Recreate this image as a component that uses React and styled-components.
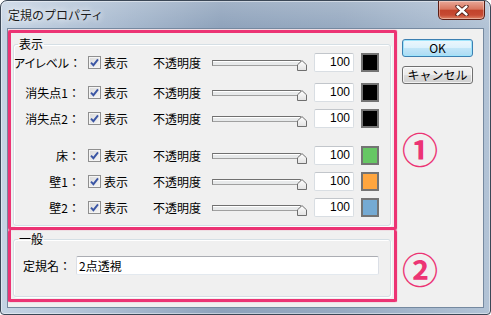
import styled, { createGlobalStyle } from "styled-components";

const GlobalStyle = createGlobalStyle`
  html, body {
    margin: 0;
    padding: 0;
    background: #ffffff;
  }
  body {
    font-family: "Noto Sans CJK JP", "Liberation Sans", sans-serif;
    font-size: 12px;
    color: #000;
  }
`;

const PINK = "#ec3474";

const Window = styled.div`
  width: 491px;
  height: 315px;
  box-sizing: border-box;
  border: 1px solid #3b4756;
  border-radius: 7px 7px 4px 4px;
  padding: 0 6px 6px;
  display: flex;
  flex-direction: column;
  background: linear-gradient(
      to bottom,
      rgba(255, 255, 255, 0.18) 0,
      rgba(255, 255, 255, 0) 28px
    ),
    linear-gradient(
      to right,
      #c6d4e4 0%,
      #b0c1d5 18%,
      #8ea2bb 45%,
      #97aac1 70%,
      #b2c3d6 100%
    );
  box-shadow: inset 0 0 0 1px rgba(255, 255, 255, 0.45);
`;

const TitleBar = styled.div`
  height: 27px;
  display: flex;
  align-items: flex-start;
  justify-content: space-between;
`;

const Title = styled.span`
  margin: 6px 0 0 1px;
  font-size: 12px;
  line-height: 16px;
  color: #1b1b1b;
  text-shadow: 0 0 6px #fff, 0 0 10px rgba(255, 255, 255, 0.8);
`;

const CloseButton = styled.div`
  width: 47px;
  height: 19px;
  margin-right: -1px;
  box-sizing: border-box;
  border: 1px solid #5c1e14;
  border-top: none;
  border-radius: 0 0 5px 5px;
  display: flex;
  align-items: center;
  justify-content: center;
  background: linear-gradient(
    to bottom,
    #e9a898 0%,
    #d9765f 45%,
    #c2432b 52%,
    #c64a33 78%,
    #df8566 100%
  );
  box-shadow: inset 0 0 0 1px rgba(255, 255, 255, 0.35);
`;

const Client = styled.div`
  flex: 1;
  display: flex;
  background: #f0f0f0;
  border: 1px solid #7589a0;
`;

const LeftCol = styled.div`
  width: 389px;
  padding-top: 1px;
  display: flex;
  flex-direction: column;
`;

const Section = styled.div`
  border: 3px solid ${PINK};
  border-top-width: ${(p) => (p.$joined ? 0 : 3)}px;
  border-radius: 2px;
  box-shadow: 0 0 1px ${PINK};
  display: flex;
  flex-direction: column;
`;

const Group = styled.fieldset`
  margin: ${(p) => p.$top}px 3px ${(p) => p.$bottom}px 2px;
  padding: 0;
  min-width: 0;
  border: 1px solid #d5dfe5;
  border-radius: 3px;
  box-shadow: inset 1px 1px 0 #fff, 1px 1px 0 #fff;
`;

const GroupTitle = styled.legend`
  margin-left: 4px;
  padding: 0 1px;
  font-size: 12px;
  line-height: 14px;
`;

const LayerList = styled.div`
  display: flex;
  flex-direction: column;
  gap: 6px;
  padding: 1px 0 8px;
`;

const LayerRow = styled.div`
  display: flex;
  align-items: center;
  height: 20px;
  margin-top: ${(p) => p.$extra || 0}px;
`;

const RowLabel = styled.span`
  width: 66px;
  flex-shrink: 0;
  text-align: right;
  white-space: nowrap;
  font-feature-settings: "palt";
`;

const Colon = styled.span`
  font-feature-settings: normal;
`;

const CheckField = styled.label`
  width: 65px;
  margin-left: 8px;
  display: flex;
  align-items: center;
  gap: 3px;
  flex-shrink: 0;
`;

const CheckBox = styled.span`
  width: 13px;
  height: 13px;
  box-sizing: border-box;
  border: 1px solid #8f8f8f;
  background: linear-gradient(135deg, #d9d9d9 0%, #f6f6f6 100%);
  box-shadow: inset 0 0 0 1px #f4f4f4;
  display: flex;
  align-items: center;
  justify-content: center;
`;

const Caption = styled.span`
  width: 48px;
  flex-shrink: 0;
  white-space: nowrap;
`;

const Slider = styled.div`
  position: relative;
  width: 95px;
  height: 20px;
  margin-left: 11px;
  flex-shrink: 0;
`;

const Track = styled.div`
  margin-top: 8px;
  width: 89px;
  height: 6px;
  box-sizing: border-box;
  border: 1px solid #a0a0a0;
  border-top-color: #707070;
  border-left-color: #808080;
  background: #e7e9ea;
  box-shadow: inset 0 1px 0 #fff;
`;

const Thumb = styled.svg`
  position: absolute;
  right: 0;
  top: 8px;
`;

const NumberBox = styled.input`
  width: 40px;
  height: 19px;
  margin-left: 7px;
  box-sizing: border-box;
  padding: 0 3px 0 0;
  border: 1px solid #d9dee3;
  border-top-color: #c2c6cb;
  border-radius: 2px;
  background: #fff;
  text-align: right;
  font-family: "Liberation Sans", sans-serif;
  font-size: 12px;
  color: #000;
  outline: none;
`;

const Swatch = styled.div`
  width: 18px;
  height: 19px;
  margin-left: 7px;
  box-sizing: border-box;
  border: 2px solid #747474;
  background: ${(p) => p.$color};
`;

const NameRow = styled.div`
  display: flex;
  align-items: center;
  height: 20px;
  padding: 9px 0 21px 9px;
`;

const NameLabel = styled.span`
  width: 53px;
  flex-shrink: 0;
  white-space: nowrap;
`;

const NameInput = styled.input`
  width: 303px;
  height: 19px;
  box-sizing: border-box;
  padding: 0 0 0 2px;
  border: 1px solid #dbdfe6;
  border-top-color: #abadb3;
  border-bottom-color: #e3e9ef;
  border-radius: 2px;
  background: #fff;
  font-family: "Noto Sans CJK JP", "Liberation Sans", sans-serif;
  font-size: 12px;
  color: #000;
  outline: none;
`;

const RightCol = styled.div`
  flex: 1;
  padding: 10px 0 0 5px;
  display: flex;
  flex-direction: column;
`;

const DialogButton = styled.button`
  width: 71px;
  height: 18px;
  margin-bottom: 9px;
  padding: 0;
  box-sizing: border-box;
  border-radius: 3px;
  font-family: "Noto Sans CJK JP", "Liberation Sans", sans-serif;
  font-size: 12px;
  line-height: 14px;
  color: #000;
  border: 1px solid ${(p) => (p.$default ? "#3c7fb1" : "#707070")};
  background: ${(p) =>
    p.$default
      ? "linear-gradient(to bottom, #ecf7fd 0%, #dcf1fc 50%, #c2e6f8 51%, #acdbf3 100%)"
      : "linear-gradient(to bottom, #f2f2f2 0%, #ebebeb 50%, #dddddd 51%, #cfcfcf 100%)"};
  box-shadow: inset 0 0 0 1px
    ${(p) => (p.$default ? "#9ee4fb" : "rgba(255,255,255,0.7)")};
`;

const Marker = styled.div`
  margin-top: ${(p) => p.$top}px;
  width: 36px;
  font-size: 36px;
  line-height: 36px;
  font-weight: 700;
  color: ${PINK};
  text-align: center;
`;

const layers = [
  { name: "アイレベル", color: "#000000" },
  { name: "消失点1", color: "#000000", extra: 4 },
  { name: "消失点2", color: "#000000" },
  { name: "床", color: "#66c764", extra: 11 },
  { name: "壁1", color: "#ffa63f" },
  { name: "壁2", color: "#75aad3" },
];

const CheckMark = () => (
  <svg width="9" height="9" viewBox="0 0 9 9">
    <path
      d="M1 4.6 L3.4 7.2 L8 1.4"
      fill="none"
      stroke="#3a55a4"
      strokeWidth="1.9"
    />
  </svg>
);

const ThumbIcon = () => (
  <Thumb width="10" height="11" viewBox="0 0 10 11">
    <defs>
      <linearGradient id="thumbFill" x1="0" y1="0" x2="0" y2="1">
        <stop offset="0" stopColor="#ffffff" />
        <stop offset="1" stopColor="#e2e2e2" />
      </linearGradient>
    </defs>
    <path
      d="M0.5 10.5 L0.5 4.8 L5 0.6 L9.5 4.8 L9.5 10.5 Z"
      fill="url(#thumbFill)"
      stroke="#6f6f6f"
    />
  </Thumb>
);

const CloseIcon = () => (
  <svg width="14" height="11" viewBox="0 0 14 11">
    <path
      d="M2.5 1.5 L11.5 9.5 M11.5 1.5 L2.5 9.5"
      stroke="#4a1a12"
      strokeWidth="4.2"
      strokeLinecap="round"
    />
    <path
      d="M2.5 1.5 L11.5 9.5 M11.5 1.5 L2.5 9.5"
      stroke="#ffffff"
      strokeWidth="2.4"
      strokeLinecap="round"
    />
  </svg>
);

export default function App() {
  return (
    <>
      <GlobalStyle />
      <Window>
        <TitleBar>
          <Title>定規のプロパティ</Title>
          <CloseButton>
            <CloseIcon />
          </CloseButton>
        </TitleBar>
        <Client>
          <LeftCol>
            <Section>
              <Group $top={4} $bottom={1}>
                <GroupTitle>表示</GroupTitle>
                <LayerList>
                  {layers.map((layer) => (
                    <LayerRow key={layer.name} $extra={layer.extra}>
                      <RowLabel>
                        {layer.name}
                        <Colon>：</Colon>
                      </RowLabel>
                      <CheckField>
                        <CheckBox>
                          <CheckMark />
                        </CheckBox>
                        表示
                      </CheckField>
                      <Caption>不透明度</Caption>
                      <Slider>
                        <Track />
                        <ThumbIcon />
                      </Slider>
                      <NumberBox readOnly value="100" />
                      <Swatch $color={layer.color} />
                    </LayerRow>
                  ))}
                </LayerList>
              </Group>
            </Section>
            <Section $joined>
              <Group $top={2} $bottom={2}>
                <GroupTitle>一般</GroupTitle>
                <NameRow>
                  <NameLabel>定規名：</NameLabel>
                  <NameInput readOnly value="2点透視" />
                </NameRow>
              </Group>
            </Section>
          </LeftCol>
          <RightCol>
            <DialogButton $default>OK</DialogButton>
            <DialogButton>キャンセル</DialogButton>
            <Marker $top={37}>①</Marker>
            <Marker $top={84}>②</Marker>
          </RightCol>
        </Client>
      </Window>
    </>
  );
}
